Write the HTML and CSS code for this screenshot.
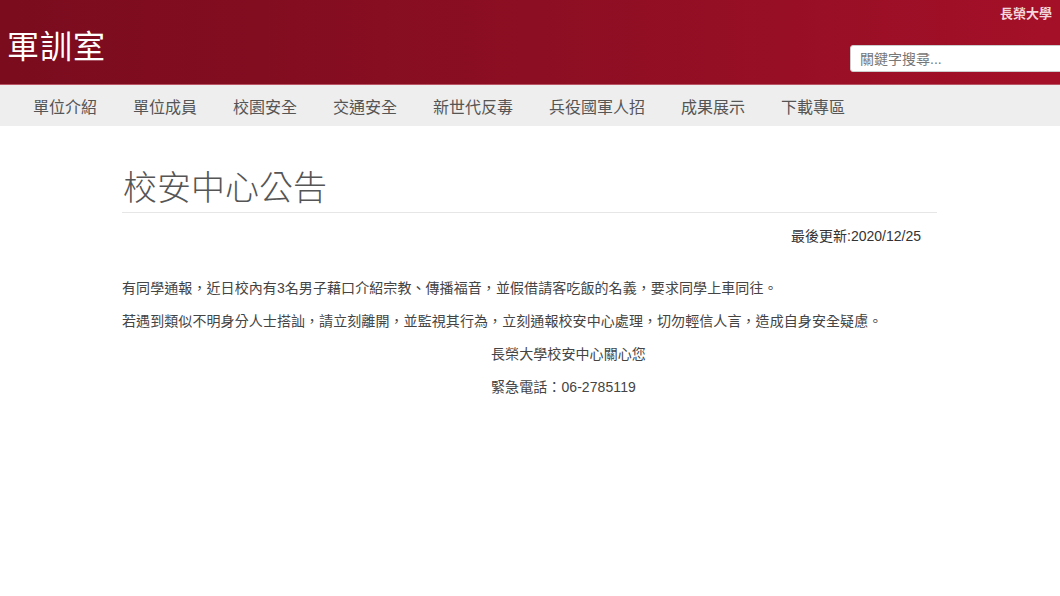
FILE: index.html
```html
<!DOCTYPE html>
<html lang="zh-Hant">
<head>
<meta charset="utf-8">
<title>軍訓室</title>
<link rel="stylesheet" href="styles.css">
</head>
<body>
<header class="top">
  <div class="brand">軍訓室</div>
  <div class="top-right">
    <a class="uni" href="#">長榮大學</a>
    <input class="search" type="text" placeholder="關鍵字搜尋...">
  </div>
</header>
<nav class="menu">
  <a href="#">單位介紹</a>
  <a href="#">單位成員</a>
  <a href="#">校園安全</a>
  <a href="#">交通安全</a>
  <a href="#">新世代反毒</a>
  <a href="#">兵役國軍人招</a>
  <a href="#">成果展示</a>
  <a href="#">下載專區</a>
</nav>
<main class="content">
  <h1 class="title">校安中心公告</h1>
  <div class="updated">最後更新:2020/12/25</div>
  <p class="para">有同學通報，近日校內有3名男子藉口介紹宗教、傳播福音，並假借請客吃飯的名義，要求同學上車同往。</p>
  <p class="para">若遇到類似不明身分人士搭訕，請立刻離開，並監視其行為，立刻通報校安中心處理，切勿輕信人言，造成自身安全疑慮。</p>
  <p class="para sign">長榮大學校安中心關心您</p>
  <p class="para sign">緊急電話：06-2785119</p>
</main>
</body>
</html>
```
FILE: styles.css
```css
html, body {
  margin: 0;
  padding: 0;
  background: #fff;
  font-family: "Liberation Sans", "Noto Sans CJK TC", sans-serif;
}
.top {
  height: 84px;
  background: linear-gradient(to right, #7a0c1e 0%, #8c0e22 50%, #a41028 100%);
  border-bottom: 1px solid #b85463;
  display: flex;
  justify-content: space-between;
  align-items: flex-start;
  overflow: hidden;
}
.brand {
  color: #fff;
  font-family: "Noto Sans CJK TC", sans-serif;
  font-size: 32px;
  line-height: 40px;
  margin-top: 24px;
  margin-left: 7px;
  letter-spacing: 1px;
}
.top-right {
  display: flex;
  flex-direction: column;
  align-items: flex-end;
}
.uni {
  color: #f2d6dc;
  font-size: 13px;
  font-weight: bold;
  line-height: 16px;
  text-decoration: none;
  margin-top: 6px;
  margin-right: 8px;
}
.search {
  margin-top: 23px;
  margin-right: -20px;
  width: 230px;
  height: 27px;
  box-sizing: border-box;
  border: 1px solid #ccc;
  border-radius: 3px;
  padding: 0 9px;
  font-family: "Liberation Sans", "Noto Sans CJK TC", sans-serif;
  font-size: 14px;
  color: #555;
  background: #fff;
}
.search::placeholder {
  color: #777;
}
.menu {
  height: 41px;
  background: #eeeeee;
  display: flex;
  align-items: center;
  padding-left: 15px;
}
.menu a {
  padding: 0 18px;
  color: #555;
  font-size: 16px;
  line-height: 20px;
  text-decoration: none;
  font-family: "Noto Sans CJK TC", sans-serif;
}
.content {
  width: 815px;
  margin: 0 0 0 122px;
}
.title {
  margin: 40px 0 0 0;
  padding: 0 0 6px 1px;
  font-family: "Noto Sans CJK TC", sans-serif;
  font-weight: 300;
  font-size: 34px;
  line-height: 40px;
  color: #555;
  border-bottom: 1px solid #e6e6e6;
}
.updated {
  margin-top: 13px;
  text-align: right;
  padding-right: 16px;
  font-size: 14px;
  line-height: 20px;
  color: #333;
}
.para {
  margin: 0;
  margin-top: 13px;
  font-size: 14px;
  line-height: 20px;
  color: #444;
  letter-spacing: 0.08px;
}
.updated + .para {
  margin-top: 32px;
}
.sign {
  padding-left: 369px;
}
```
